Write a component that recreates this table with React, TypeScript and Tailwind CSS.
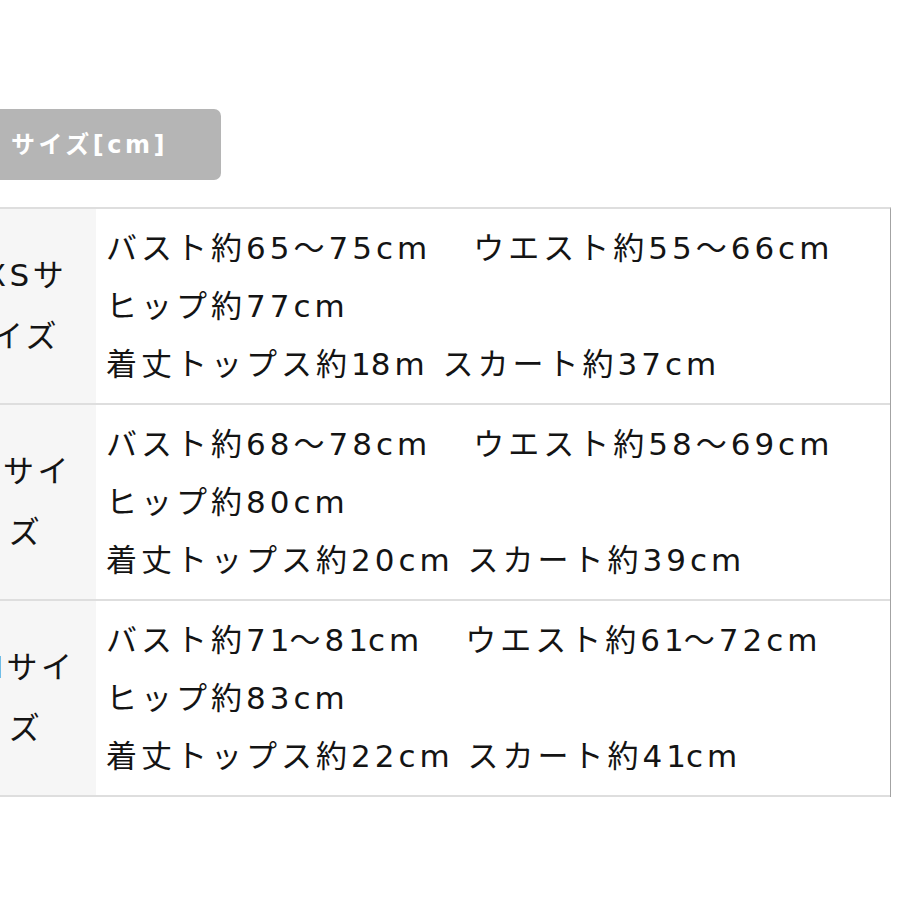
import React from "react";

const rows = [
  {
    label: "XSサイズ",
    lines: [
      "バスト約65〜75cm\u3000\u200Aウエスト約55〜66cm",
      "ヒップ約77cm",
      "着丈トップス約18m スカート約37cm",
    ],
  },
  {
    label: "Sサイズ",
    lines: [
      "バスト約68〜78cm\u3000\u200Aウエスト約58〜69cm",
      "ヒップ約80cm",
      "着丈トップス約20cm スカート約39cm",
    ],
  },
  {
    label: "Mサイズ",
    lines: [
      "バスト約71〜81cm\u3000\u200Aウエスト約61〜72cm",
      "ヒップ約83cm",
      "着丈トップス約22cm スカート約41cm",
    ],
  },
];

function Line({ text }: { text: string }) {
  const parts = text.split("1");
  return (
    <div>
      {parts.map((p, i) => (
        <React.Fragment key={i}>
          {p}
          {i < parts.length - 1 && <span className="tracking-[0px]">1</span>}
        </React.Fragment>
      ))}
    </div>
  );
}

export default function App() {
  return (
    <div className="w-[900px] h-[900px] overflow-hidden bg-white pt-[109px] font-['DejaVu_Sans','Noto_Sans_CJK_JP',sans-serif] text-[#141414]">
      <div className="-ml-[20px] flex h-[71px] w-[241px] items-center rounded-[7px] bg-[#b5b5b5] pl-[31px] text-[24px] font-bold tracking-[3.5px] text-white">
        サイズ[cm]
      </div>
      <div className="mt-[27px] -ml-[44px] w-[935px] border-t-2 border-r border-t-[#dedede] border-r-[#a3a3a3]">
        {rows.map((r) => (
          <div
            key={r.label}
            className="grid grid-cols-[140px_1fr] border-b-2 border-[#dedede]"
          >
            <div className="flex items-center justify-center bg-[#f6f6f6] px-[16px] text-center text-[31px] leading-[61px] tracking-[3.5px]">
              <span>{r.label}</span>
            </div>
            <div className="py-[10px] pl-[10px] text-[31px] leading-[58px] tracking-[4px] whitespace-pre">
              {r.lines.map((l, i) => (
                <Line key={i} text={l} />
              ))}
            </div>
          </div>
        ))}
      </div>
    </div>
  );
}
